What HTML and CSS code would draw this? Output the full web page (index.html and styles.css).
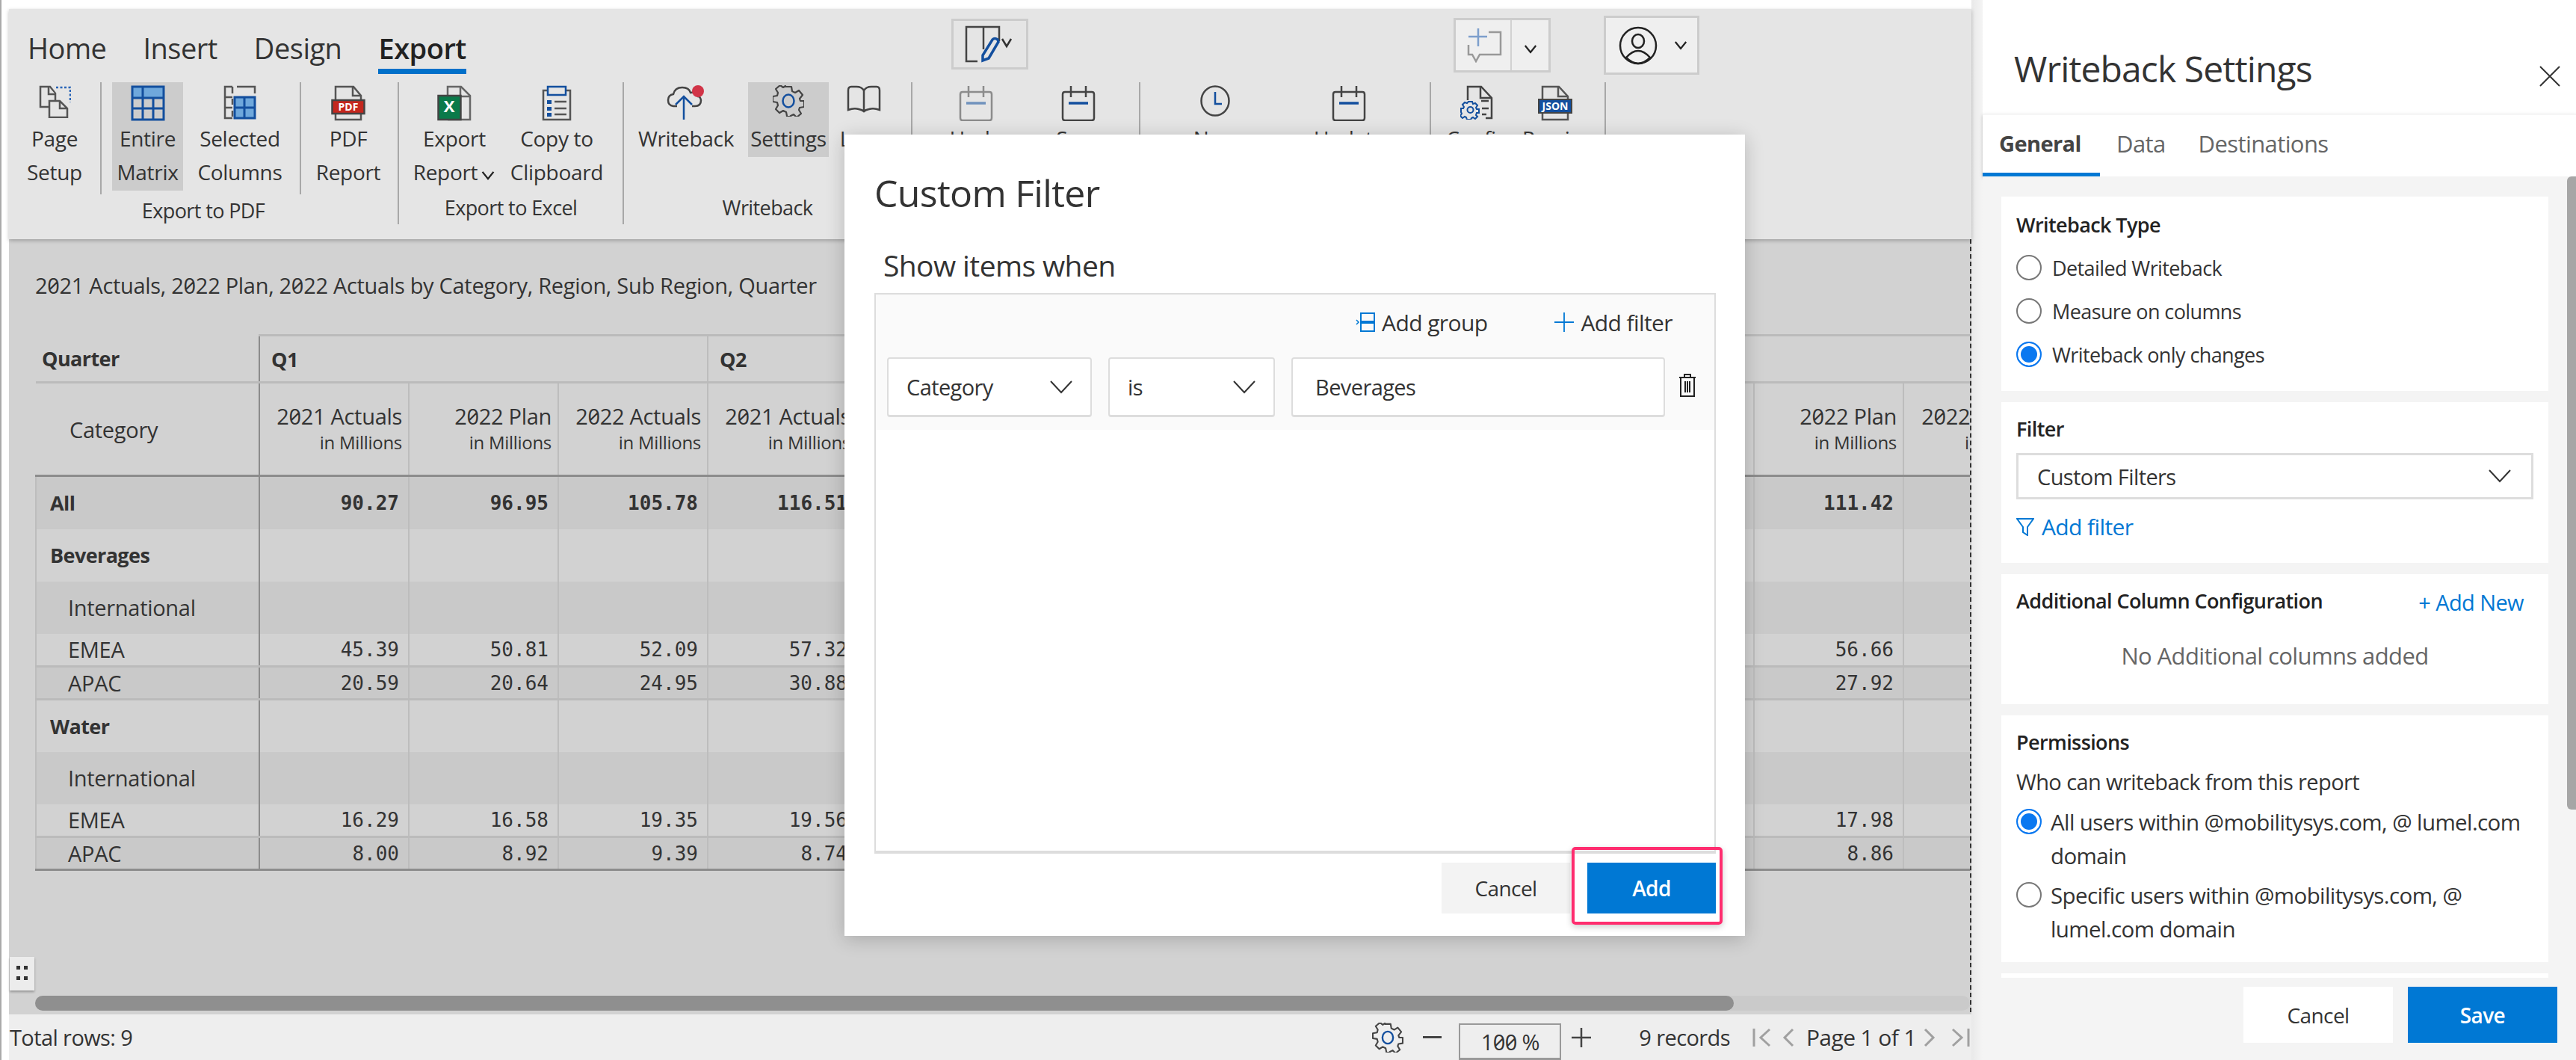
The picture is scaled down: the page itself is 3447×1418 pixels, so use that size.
FILE: index.html
```html
<!DOCTYPE html>
<html lang="en">

<head>
    <meta charset="UTF-8">
    <title>Writeback Settings</title>
    <link rel="stylesheet" href="styles.css">
</head>

<body>
    <svg class="sprite">
        <symbol id="calendar" viewBox="0 0 46 48">
            <path d="M13 1v15M33 1v15M2 12q0-3 3-3h36q3 0 3 3v32q0 3-3 3H5q-3 0-3-3z" fill="none" stroke="#444" stroke-width="2.5"/>
            <path d="M10 24h26" stroke="#134f9e" stroke-width="3.5"/>
        </symbol>
        <symbol id="gear" viewBox="0 0 42 42">
            <path d="M17 2h8l1 6 4 2 5-3 5 6-4 5 1 3h5v8l-6 1-1 3 3 5-6 5-4-4-4 2-1 1h-4v-1l-1-5-4-2-5 3-5-5 3-5-1-4-6-1v-7l6-1 1-4-3-5 6-5 4 3 3-2z" fill="none" stroke="#444" stroke-width="2.2" stroke-linejoin="round"/>
            <ellipse cx="21" cy="21" rx="7.5" ry="8.5" fill="none" stroke="#134f9e" stroke-width="2.5"/>
        </symbol>
        <symbol id="chev" viewBox="0 0 20 14">
            <path d="M2 2l8 10 8-10" fill="none" stroke="currentColor" stroke-width="2.5"/>
        </symbol>
    </svg>

    <div class="report">
        <div class="toolbar">
            <div class="topbar">
                <div class="tabs">
                    <span>Home</span>
                    <span>Insert</span>
                    <span>Design</span>
                    <span class="tab-on">Export</span>
                </div>
                <div class="tool-btn edit-btn">
                    <svg width="72" height="50" viewBox="0 0 72 50">
                        <path d="M18 48H3V2h44v19M26 2v30" fill="none" stroke="#444" stroke-width="2.5"/>
                        <path d="M25 40l13-21q3-3 7 0l1 3-13 22-8 3z" fill="none" stroke="#134f9e" stroke-width="3.5"/>
                        <path d="M51 18l6 10 6-10" fill="none" stroke="#333" stroke-width="2.5"/>
                    </svg>
                </div>
                <div class="tool-btn comment-btn">
                    <div class="comment-main">
                        <svg width="50" height="46" viewBox="0 0 50 46">
                            <path d="M30 5h16v30H18l-5 9-5-9H3V22" fill="none" stroke="#999" stroke-width="2.5"/>
                            <path d="M16 0v24M3 11h25" stroke="#7d9fcc" stroke-width="2.5"/>
                        </svg>
                    </div>
                    <div class="comment-arrow"><svg class="chev-sm" viewBox="0 0 20 14"><use href="#chev"/></svg></div>
                </div>
                <div class="tool-btn user-btn">
                    <svg width="52" height="52" viewBox="0 0 52 52">
                        <circle cx="26" cy="26" r="24" fill="none" stroke="#222" stroke-width="2.5"/>
                        <ellipse cx="26" cy="20" rx="8" ry="9" fill="none" stroke="#222" stroke-width="2.5"/>
                        <path d="M10 42q16-18 32 0q-16 16-32 0z" fill="none" stroke="#222" stroke-width="2.5"/>
                    </svg>
                    <svg class="chev-sm" viewBox="0 0 20 14"><use href="#chev"/></svg>
                </div>
            </div>

            <div class="ribbon">
                <div class="group group-pdf">
                    <div class="group-items">
                        <div class="item w-page">
                            <div class="icon">
                                <svg width="44" height="44" viewBox="0 0 44 44">
                                    <path d="M3 2h13l7 9v18H3z" fill="none" stroke="#555" stroke-width="2.5"/>
                                    <path d="M14 2v10h9M15 21h14l10 10v12H15z" fill="#e5e5e5" stroke="#555" stroke-width="2.5"/>
                                    <path d="M29 21v10h10" fill="none" stroke="#555" stroke-width="2.5"/>
                                    <path d="M24 3h19v20" fill="none" stroke="#2a66b8" stroke-width="2.5" stroke-dasharray="3 2.5"/>
                                </svg>
                            </div>
                            Page<br>Setup
                        </div>
                        <div class="sep"></div>
                        <div class="item item-on w-matrix">
                            <div class="icon">
                                <svg width="46" height="48" viewBox="0 0 46 48">
                                    <path d="M2 2h42v14H2z" fill="#6fa8dc"/>
                                    <path d="M2 2h42v44H2zM2 17h42M2 31h42M16 2v44M30 17v29" fill="none" stroke="#134f9e" stroke-width="3"/>
                                </svg>
                            </div>
                            Entire<br>Matrix
                        </div>
                        <div class="item w-selected">
                            <div class="icon">
                                <svg width="44" height="46" viewBox="0 0 44 46">
                                    <path d="M15 16h27v28H15z" fill="#6fa8dc"/>
                                    <path d="M12 2H2v42h10M18 2h24v9M2 16h10M2 30h10M12 2v9M12 18v8M12 34v8" fill="none" stroke="#555" stroke-width="2.5"/>
                                    <path d="M15 16h27v28H15zM15 30h27M28 16v28" fill="none" stroke="#134f9e" stroke-width="3"/>
                                </svg>
                            </div>
                            Selected<br>Columns
                        </div>
                        <div class="sep"></div>
                        <div class="item w-pdf">
                            <div class="icon">
                                <svg width="46" height="48" viewBox="0 0 46 48">
                                    <path d="M6 20V2h24l10 12v6M6 38v8h34v-8" fill="none" stroke="#555" stroke-width="2.5"/>
                                    <path d="M29 2v12h11" fill="none" stroke="#555" stroke-width="2.5"/>
                                    <rect x="1.5" y="20" width="43" height="18" fill="#c4271e" stroke="#444" stroke-width="2.5"/>
                                    <text x="23" y="34" class="svg-label" font-size="14">PDF</text>
                                </svg>
                            </div>
                            PDF<br>Report
                        </div>
                    </div>
                    <div class="group-label">Export to PDF</div>
                </div>

                <div class="group group-excel">
                    <div class="group-items">
                        <div class="item w-export">
                            <div class="icon">
                                <svg width="46" height="48" viewBox="0 0 46 48">
                                    <path d="M14 14V2h18l12 12v32H14" fill="#e5e5e5" stroke="#666" stroke-width="2.5"/>
                                    <path d="M31 2v13h13M30 14v32" fill="none" stroke="#666" stroke-width="2.5"/>
                                    <rect x="1.5" y="14" width="30" height="32" fill="#0a7a4a" stroke="#444" stroke-width="2.5"/>
                                    <text x="16" y="36" class="svg-label" font-size="22">X</text>
                                </svg>
                            </div>
                            Export<br>Report<svg class="chev-in" viewBox="0 0 20 14"><use href="#chev"/></svg>
                        </div>
                        <div class="item w-copy">
                            <div class="icon">
                                <svg width="40" height="48" viewBox="0 0 40 48">
                                    <path d="M8 7H2v39h36V7h-6" fill="none" stroke="#555" stroke-width="2.5"/>
                                    <rect x="8" y="2" width="24" height="11" fill="none" stroke="#134f9e" stroke-width="2.5"/>
                                    <path d="M7 20h6v5H7zM7 29h6v5H7zM7 37h6v5H7z" fill="#134f9e"/>
                                    <path d="M17 22h16M17 31h16M17 39h16" stroke="#555" stroke-width="2.5"/>
                                </svg>
                            </div>
                            Copy to<br>Clipboard
                        </div>
                    </div>
                    <div class="group-label">Export to Excel</div>
                </div>

                <div class="group group-wb">
                    <div class="group-items">
                        <div class="item w-wb">
                            <div class="icon">
                                <svg width="52" height="48" viewBox="0 0 52 48">
                                    <path d="M14 28H9q-7-1-7-8t7-8q2-9 12-9 9 0 11 7 8-1 10 5 3 0 4 5 0 8-8 8h-4" fill="none" stroke="#444" stroke-width="2.5"/>
                                    <path d="M23 46V15M12 26l11-11 11 11" fill="none" stroke="#134f9e" stroke-width="2.5"/>
                                    <circle cx="42" cy="8" r="8" fill="#d13447"/>
                                </svg>
                            </div>
                            Writeback
                        </div>
                        <div class="item item-on w-settings">
                            <div class="icon"><svg width="42" height="42"><use href="#gear"/></svg></div>
                            Settings
                        </div>
                        <div class="item w-learn">
                            <div class="icon">
                                <svg width="46" height="38" viewBox="0 0 46 38">
                                    <path d="M23 7q-3-5-10-5H6Q2 2 2 7l0 26q8-3 14-1 5 1 7 3 2-2 7-3 6-2 14 1V7q0-5-4-5h-7q-7 0-10 5zM23 7v28" fill="none" stroke="#444" stroke-width="2.5"/>
                                </svg>
                            </div>
                            Learn
                        </div>
                    </div>
                    <div class="group-label">Writeback</div>
                </div>

                <div class="group group-cal">
                    <div class="group-items">
                        <div class="item w-cal1">
                            <div class="icon"><svg class="faded" width="46" height="48"><use href="#calendar"/></svg></div>
                            Undo
                        </div>
                        <div class="item w-cal2">
                            <div class="icon"><svg width="46" height="48"><use href="#calendar"/></svg></div>
                            Save
                        </div>
                    </div>
                </div>

                <div class="group group-now">
                    <div class="group-items">
                        <div class="item w-now">
                            <div class="icon">
                                <svg width="40" height="42" viewBox="0 0 40 42">
                                    <ellipse cx="20" cy="21" rx="18.5" ry="19.5" fill="none" stroke="#444" stroke-width="2.5"/>
                                    <path d="M20 9v16h9" fill="none" stroke="#134f9e" stroke-width="2.5"/>
                                </svg>
                            </div>
                            Now
                        </div>
                        <div class="item w-cal3">
                            <div class="icon"><svg width="46" height="48"><use href="#calendar"/></svg></div>
                            Update
                        </div>
                    </div>
                </div>

                <div class="group group-config">
                    <div class="group-items">
                        <div class="item w-config">
                            <div class="icon">
                                <svg width="44" height="46" viewBox="0 0 44 46">
                                    <path d="M10 20V2h18l14 15v27h-8" fill="none" stroke="#444" stroke-width="2.5"/>
                                    <path d="M27 2v15h15M28 21h10M29 31h9M29 39h6" fill="none" stroke="#444" stroke-width="2.5"/>
                                    <path d="M11 22h5l1 3 3-1 3 3-2 3 1 2h3v5h-3l-1 3 2 2-3 3-3-2-2 1-1 2h-5l-1-3-2-1-3 2-3-3 2-3-1-2H1v-5h3l1-2-2-3 3-3 3 1z" fill="#e5e5e5" stroke="#134f9e" stroke-width="2"/>
                                    <circle cx="13.5" cy="33" r="4" fill="none" stroke="#134f9e" stroke-width="2"/>
                                </svg>
                            </div>
                            Config
                        </div>
                        <div class="item w-json">
                            <div class="icon">
                                <svg width="46" height="48" viewBox="0 0 46 48">
                                    <path d="M6 20V2h22l12 13v5M6 36v10h34V36" fill="none" stroke="#555" stroke-width="2.5"/>
                                    <path d="M27 2v13h13" fill="none" stroke="#555" stroke-width="2.5"/>
                                    <rect x="1" y="19" width="44" height="18" fill="#134f9e" stroke="#444" stroke-width="2"/>
                                    <text x="23" y="33" class="svg-label" font-size="14">JSON</text>
                                </svg>
                            </div>
                            Preview
                        </div>
                    </div>
                </div>
            </div>
        </div>

        <div class="canvas">
            <div class="report-title">2021 Actuals, 2022 Plan, 2022 Actuals by Category, Region, Sub Region, Quarter</div>
            <div class="table-clip">
                <table class="matrix">
                    <colgroup>
                        <col class="col-label"><col class="col-num"><col class="col-num"><col class="col-num"><col class="col-num"><col class="col-hidden"><col class="col-num"><col class="col-num">
                    </colgroup>
                    <thead>
                        <tr class="h-quarter">
                            <th class="first">Quarter</th>
                            <th colspan="3">Q1</th>
                            <th colspan="4">Q2</th>
                        </tr>
                        <tr class="h-measure">
                            <th class="first cat">Category</th>
                            <th>2021 Actuals<small>in Millions</small></th>
                            <th>2022 Plan<small>in Millions</small></th>
                            <th>2022 Actuals<small>in Millions</small></th>
                            <th>2021 Actuals<small>in Millions</small></th>
                            <th></th>
                            <th>2022 Plan<small>in Millions</small></th>
                            <th>2022 Actuals<small>in Millions</small></th>
                        </tr>
                    </thead>
                    <tbody>
                        <tr class="r-all"><td class="first">All</td><td>90.27</td><td>96.95</td><td>105.78</td><td>116.51</td><td></td><td>111.42</td><td></td></tr>
                        <tr class="r-cat"><td class="first">Beverages</td><td></td><td></td><td></td><td></td><td></td><td></td><td></td></tr>
                        <tr class="r-group"><td class="first">International</td><td></td><td></td><td></td><td></td><td></td><td></td><td></td></tr>
                        <tr class="r-leaf"><td class="first">EMEA</td><td>45.39</td><td>50.81</td><td>52.09</td><td>57.32</td><td></td><td>56.66</td><td></td></tr>
                        <tr class="r-leaf alt"><td class="first">APAC</td><td>20.59</td><td>20.64</td><td>24.95</td><td>30.88</td><td></td><td>27.92</td><td></td></tr>
                        <tr class="r-cat"><td class="first">Water</td><td></td><td></td><td></td><td></td><td></td><td></td><td></td></tr>
                        <tr class="r-group"><td class="first">International</td><td></td><td></td><td></td><td></td><td></td><td></td><td></td></tr>
                        <tr class="r-leaf"><td class="first">EMEA</td><td>16.29</td><td>16.58</td><td>19.35</td><td>19.56</td><td></td><td>17.98</td><td></td></tr>
                        <tr class="r-leaf alt last"><td class="first">APAC</td><td>8.00</td><td>8.92</td><td>9.39</td><td>8.74</td><td></td><td>8.86</td><td></td></tr>
                    </tbody>
                </table>
            </div>
            <div class="drag-handle"><span></span><span></span><span></span><span></span></div>
            <div class="hscroll"><div class="hscroll-thumb"></div></div>
        </div>

        <div class="statusbar">
            <span class="total">Total rows: 9</span>
            <div class="status-right">
                <svg class="st-gear" width="42" height="40"><use href="#gear"/></svg>
                <span class="st-minus"></span>
                <span class="zoom-box">100 %</span>
                <svg class="st-plus" width="26" height="26" viewBox="0 0 26 26"><path d="M13 0v26M0 13h26" stroke="#444" stroke-width="2.5"/></svg>
                <span class="records">9 records</span>
                <svg class="pager first-pg" width="26" height="26" viewBox="0 0 26 26"><path d="M2 1v24M23 2L11 13l12 11" fill="none" stroke="#a0a0a0" stroke-width="3"/></svg>
                <svg class="pager" width="16" height="26" viewBox="0 0 16 26"><path d="M14 2L3 13l11 11" fill="none" stroke="#a0a0a0" stroke-width="3"/></svg>
                <span class="page-no">Page 1 of 1</span>
                <svg class="pager" width="16" height="26" viewBox="0 0 16 26"><path d="M2 2l11 11L2 24" fill="none" stroke="#a0a0a0" stroke-width="3"/></svg>
                <svg class="pager last-pg" width="26" height="26" viewBox="0 0 26 26"><path d="M24 1v24M3 2l12 11L3 24" fill="none" stroke="#a0a0a0" stroke-width="3"/></svg>
            </div>
        </div>

        <div class="modal">
            <div class="modal-title">Custom Filter</div>
            <div class="modal-sub">Show items when</div>
            <div class="filter-box">
                <div class="filter-head">
                    <div class="filter-actions">
                        <span class="action">
                            <svg width="26" height="26" viewBox="0 0 26 26"><path d="M7 1h18v11H7zM7 14h18v11H7z" fill="none" stroke="#0078d4" stroke-width="2"/><path d="M1 10l3 3-3 3" fill="none" stroke="#0078d4" stroke-width="1.5"/></svg>
                            Add group
                        </span>
                        <span class="action">
                            <svg width="26" height="26" viewBox="0 0 26 26"><path d="M13 0v26M0 13h26" stroke="#0078d4" stroke-width="1.8"/></svg>
                            Add filter
                        </span>
                    </div>
                    <div class="filter-row">
                        <div class="field f-category">Category<svg class="chev-lg" viewBox="0 0 30 18"><path d="M1 1l14 15L29 1" fill="none" stroke="#333" stroke-width="2"/></svg></div>
                        <div class="field f-is">is<svg class="chev-lg" viewBox="0 0 30 18"><path d="M1 1l14 15L29 1" fill="none" stroke="#333" stroke-width="2"/></svg></div>
                        <div class="field f-value">Beverages</div>
                        <svg class="trash" width="24" height="32" viewBox="0 0 24 32">
                            <path d="M1 5h22M8 5V1h8v4M3 5v25h18V5M9 10v15M12 10v15M15 10v15" fill="none" stroke="#222" stroke-width="2"/>
                        </svg>
                    </div>
                </div>
            </div>
            <div class="modal-foot">
                <button type="button" class="btn-cancel">Cancel</button>
                <div class="highlight"><button type="button" class="btn-add">Add</button></div>
            </div>
        </div>
    </div>

    <div class="gutter"></div>

    <div class="panel">
        <div class="panel-head">
            <span class="panel-title">Writeback Settings</span>
            <svg class="close" width="28" height="28" viewBox="0 0 28 28"><path d="M1 1l26 26M27 1L1 27" stroke="#333" stroke-width="2"/></svg>
        </div>
        <div class="panel-tabs">
            <span class="ptab ptab-on">General</span>
            <span class="ptab">Data</span>
            <span class="ptab">Destinations</span>
        </div>
        <div class="panel-body">
            <div class="card card-type">
                <div class="card-head">Writeback Type</div>
                <label class="radio-row"><span class="radio"></span>Detailed Writeback</label>
                <label class="radio-row"><span class="radio"></span>Measure on columns</label>
                <label class="radio-row"><span class="radio radio-on"></span>Writeback only changes</label>
            </div>
            <div class="card card-filter">
                <div class="card-head">Filter</div>
                <div class="select">Custom Filters<svg class="chev-lg" viewBox="0 0 30 18"><path d="M1 1l14 15L29 1" fill="none" stroke="#333" stroke-width="2"/></svg></div>
                <div class="link">
                    <svg width="24" height="24" viewBox="0 0 24 24"><path d="M1 1h22l-8 11v11l-6-4v-7z" fill="none" stroke="#0078d4" stroke-width="2"/></svg>
                    Add filter
                </div>
            </div>
            <div class="card card-cols">
                <div class="card-row">
                    <div class="card-head">Additional Column Configuration</div>
                    <span class="add-new">+ Add New</span>
                </div>
                <div class="empty">No Additional columns added</div>
            </div>
            <div class="card card-perm">
                <div class="card-head">Permissions</div>
                <div class="perm-sub">Who can writeback from this report</div>
                <label class="radio-row radio-wrap"><span class="radio radio-on"></span><span>All users within @mobilitysys.com, @ lumel.com domain</span></label>
                <label class="radio-row radio-wrap"><span class="radio"></span><span>Specific users within @mobilitysys.com, @ lumel.com domain</span></label>
            </div>
            <div class="card card-more"></div>
            <div class="panel-scroll"></div>
        </div>
        <div class="panel-foot">
            <button type="button" class="foot-cancel">Cancel</button>
            <button type="button" class="foot-save">Save</button>
        </div>
    </div>
</body>

</html>
```

FILE: styles.css
```css
* {
    box-sizing: border-box;
}
body {
    margin: 0;
    height: 1418px;
    display: flex;
    overflow: hidden;
    background: #fff;
    border-left: 2px solid #aaa;
    font-family: "Open Sans", "Noto Sans", sans-serif;
    font-size: 28px;
    letter-spacing: -0.6px;
    color: #333;
}
button {
    font: inherit;
    letter-spacing: inherit;
    border: none;
}
.sprite {
    display: none;
}
.faded {
    opacity: 0.55;
}
.svg-label {
    fill: #fff;
    font-weight: 700;
    text-anchor: middle;
    letter-spacing: 0;
}
.chev-sm {
    width: 18px;
    height: 13px;
    color: #222;
}
.chev-lg {
    width: 30px;
    height: 18px;
}
.chev-in {
    width: 20px;
    height: 13px;
    margin-left: 4px;
    color: #222;
}

/* left report */
.report {
    position: relative;
    width: 2626px;
    margin: 12px 0 0 10px;
    display: flex;
    flex-direction: column;
}
.toolbar {
    height: 308px;
    background: #e5e5e5;
    box-shadow: 0 2px 5px rgba(0, 0, 0, 0.25);
    position: relative;
    z-index: 1;
}
.topbar {
    height: 98px;
    display: flex;
    align-items: flex-start;
}
.tabs {
    display: flex;
    width: 600px;
    gap: 49px;
    margin: 24px 0 0 25px;
    font-size: 38px;
    line-height: 56px;
    letter-spacing: -0.5px;
}
.tabs span {
    height: 63px;
}
.tab-on {
    font-weight: 600;
    color: #222;
    border-bottom: 7px solid #0070c9;
}
.tool-btn {
    display: flex;
    align-items: center;
    border: 3px solid #ccc;
}
.edit-btn {
    width: 103px;
    height: 68px;
    margin: 13px 0 0 636px;
    padding-left: 14px;
}
.comment-btn {
    width: 130px;
    height: 73px;
    margin: 12px 0 0 569px;
    background: #efefef;
}
.comment-main {
    width: 75px;
    height: 100%;
    padding: 11px 0 0 14px;
    border-right: 2px solid #d2d2d2;
}
.comment-arrow {
    flex: 1;
    text-align: center;
}
.user-btn {
    width: 128px;
    height: 79px;
    margin: 9px 0 0 71px;
    padding-left: 17px;
    gap: 22px;
    background: #efefef;
}

.ribbon {
    display: flex;
    height: 190px;
}
.group {
    border-right: 2px solid #a8a8a8;
    display: flex;
    flex-direction: column;
    align-items: stretch;
}
.group-pdf { width: 522px; }
.group-excel { width: 301px; }
.group-wb { width: 386px; }
.group-cal { width: 305px; }
.group-now { width: 389px; }
.group-config { width: 234px; }
.group-items {
    display: flex;
    align-items: flex-start;
    height: 150px;
}
.group-label {
    text-align: center;
    line-height: 44px;
    font-size: 27px;
}
.item {
    text-align: center;
    line-height: 45px;
    padding-bottom: 2px;
    white-space: nowrap;
    letter-spacing: -0.3px;
}
.item-on {
    background: #ccc;
}
.icon {
    height: 53px;
    padding-top: 4px;
    display: flex;
    justify-content: center;
    align-items: flex-start;
}
.sep {
    width: 2px;
    height: 150px;
    background: #a8a8a8;
}
.w-page { width: 122px; }
.w-matrix { width: 95px; margin-left: 14px; }
.w-selected { width: 152px; margin-right: 4px; }
.w-pdf { width: 126px; }
.w-export { width: 148px; }
.w-copy { width: 126px; }
.w-wb { width: 166px; }
.w-settings { width: 108px; }
.w-learn { width: 94px; letter-spacing: -2px; }
.w-cal1 { width: 170px; }
.w-cal2 { width: 104px; }
.w-now { width: 200px; }
.w-cal3 { width: 158px; }
.w-config { width: 122px; }
.w-json { width: 88px; }

/* matrix area */
.canvas {
    position: relative;
    flex: 1;
    display: flex;
    flex-direction: column;
    min-height: 0;
    background: #d2d2d2;
    padding: 42px 0 2px 35px;
    border-right: 2px dashed #333;
}
.report-title {
    line-height: 40px;
    font-size: 29px;
    letter-spacing: -0.3px;
    font-feature-settings: "zero";
}
.table-clip {
    margin-top: 45px;
    overflow: hidden;
}
.matrix {
    table-layout: fixed;
    width: 2699px;
    border-collapse: collapse;
    font-family: "DejaVu Sans Mono", monospace;
    font-size: 26px;
    letter-spacing: 0;
}
.col-label { width: 299px; }
.col-num { width: 200px; }
.col-hidden { width: 1200px; }
.matrix th,
.matrix td {
    padding: 0;
    border-left: 2px solid #bdbdbd;
}
.matrix .first {
    text-align: left;
    font-family: "Open Sans", "Noto Sans", sans-serif;
    font-size: 27px;
    letter-spacing: -0.6px;
    border-left: 2px solid #bdbdbd;
    border-right: 2px solid #8c8c8c;
}
.h-quarter th {
    height: 63px;
    text-align: left;
    padding-left: 15px;
    font-family: "Open Sans", "Noto Sans", sans-serif;
    font-weight: 700;
    font-size: 27px;
    letter-spacing: -0.6px;
    border-top: 3px solid #bbb;
    border-bottom: 3px solid #bbb;
}
.matrix .h-quarter .first,
.matrix .h-measure .first {
    border-left: none;
}
.matrix .h-quarter .first {
    padding-left: 8px;
    font-weight: 700;
    border-top: none;
}
.h-measure th {
    height: 125px;
    text-align: right;
    padding-right: 8px;
    font-family: "Open Sans", "Noto Sans", sans-serif;
    font-weight: 400;
    font-size: 29px;
    line-height: 35px;
    letter-spacing: -0.3px;
    font-feature-settings: "zero";
    border-bottom: 3px solid #8c8c8c;
    vertical-align: middle;
}
.h-measure small {
    display: block;
    font-size: 24px;
}
.matrix .h-measure .cat {
    padding-left: 45px;
    font-weight: 400;
    font-size: 29px;
    letter-spacing: -0.3px;
}
.matrix td {
    text-align: right;
    padding-right: 12px;
}
.matrix tbody .first {
    padding-left: 18px;
}
.r-all td,
.r-cat td,
.r-group td {
    height: 70px;
}
.r-all td {
    height: 71px;
    background: #c9c9c9;
    font-weight: 700;
}
.r-cat td {
    background: #d2d2d2;
}
.matrix .r-all .first,
.matrix .r-cat .first {
    font-weight: 700;
}
.r-group td {
    background: #c9c9c9;
}
.matrix .r-group .first,
.matrix .r-leaf .first {
    padding-left: 42px;
    font-size: 29px;
    letter-spacing: -0.3px;
}
.r-leaf td {
    height: 44px;
    background: #d2d2d2;
    border-bottom: 3px solid #bbb;
}
.r-leaf.alt td {
    background: #c9c9c9;
}
.r-leaf.last td {
    border-bottom: 3px solid #8c8c8c;
}
.drag-handle {
    position: absolute;
    left: 1px;
    bottom: 29px;
    width: 33px;
    height: 45px;
    padding: 12px 9px;
    background: #ececec;
    box-shadow: 0 2px 3px rgba(0, 0, 0, 0.3);
    display: grid;
    grid-template-columns: 6px 6px;
    gap: 6px 4px;
}
.drag-handle span {
    width: 5px;
    height: 5px;
    background: #333;
}
.hscroll {
    margin-top: auto;
    height: 20px;
    border-radius: 10px;
    background: #cacaca;
}
.hscroll-thumb {
    width: 2273px;
    height: 20px;
    border-radius: 10px;
    background: #8f8f8f;
}
.statusbar {
    height: 64px;
    display: flex;
    align-items: center;
    background: #eee;
    border-top: 3px solid #d2d2d2;
    font-size: 29px;
}
.total {
    margin-left: 1px;
}
.status-right {
    margin-left: auto;
    display: flex;
    align-items: center;
    height: 100%;
}
.st-gear {
    margin-right: 26px;
}
.st-minus {
    width: 25px;
    height: 3px;
    background: #444;
}
.zoom-box {
    width: 137px;
    height: 49px;
    margin: 11px 14px 0 23px;
    line-height: 46px;
    text-align: center;
    border: 2px solid #999;
    border-bottom-width: 3px;
    font-feature-settings: "zero";
}
.records {
    margin: 0 30px 0 64px;
}
.first-pg {
    margin-right: 14px;
}
.page-no {
    margin: 0 10px 0 16px;
    font-size: 30px;
}
.last-pg {
    margin: 0 2px 0 20px;
}

/* custom filter dialog */
.modal {
    position: absolute;
    z-index: 2;
    left: 1118px;
    top: 168px;
    width: 1205px;
    height: 1072px;
    padding: 0 39px 0 40px;
    background: #fff;
    box-shadow: 0 4px 24px rgba(0, 0, 0, 0.2);
    display: flex;
    flex-direction: column;
}
.modal-title {
    margin-top: 50px;
    font-size: 50px;
    line-height: 56px;
    letter-spacing: -0.7px;
}
.modal-sub {
    margin: 45px 0 0 12px;
    font-size: 39px;
    line-height: 48px;
    letter-spacing: -0.6px;
}
.filter-box {
    margin-top: 13px;
    height: 750px;
    border: 2px solid #ddd;
    border-bottom-width: 4px;
}
.filter-head {
    height: 181px;
    background: #fafafa;
    padding: 0 15px;
}
.filter-actions {
    display: flex;
    justify-content: flex-end;
    gap: 90px;
    height: 84px;
    padding: 24px 41px 0 0;
}
.action {
    display: flex;
    align-items: center;
    gap: 9px;
    height: 26px;
    font-size: 30px;
}
.filter-row {
    display: flex;
    align-items: center;
    gap: 22px;
    font-size: 29px;
}
.field {
    height: 80px;
    background: #fff;
    border: 2px solid #ddd;
    border-bottom-width: 3px;
    border-radius: 4px;
    padding: 0 24px;
    display: flex;
    align-items: center;
    justify-content: space-between;
}
.f-category { width: 274px; }
.f-is { width: 223px; }
.f-value { width: 500px; padding-left: 30px; }
.trash {
    margin-left: -4px;
    margin-top: -4px;
}
.modal-foot {
    display: flex;
    justify-content: flex-end;
    margin-top: 12px;
    height: 68px;
}
.btn-cancel {
    width: 172px;
    height: 68px;
    background: #f3f3f3;
    color: #333;
}
.highlight {
    position: relative;
    margin-left: 23px;
    width: 172px;
    height: 68px;
}
.highlight::after {
    content: "";
    box-sizing: border-box;
    position: absolute;
    left: -21px;
    top: -21px;
    width: 202px;
    height: 104px;
    border: 4px solid #ff2d6f;
    border-radius: 5px;
    box-shadow: 0 3px 8px rgba(0, 0, 0, 0.2);
}
.btn-add {
    width: 172px;
    height: 68px;
    background: #0078d4;
    color: #fff;
    font-weight: 600;
}

/* settings panel */
.gutter {
    width: 15px;
    background: linear-gradient(to right, #e9e9e9, #f4f4f4);
}
.panel {
    width: 794px;
    display: flex;
    flex-direction: column;
    height: 1418px;
    background: #fff;
}
.panel-head {
    height: 152px;
    padding: 62px 21px 0 42px;
    display: flex;
    justify-content: space-between;
    align-items: flex-start;
}
.panel-title {
    font-size: 48px;
    line-height: 60px;
    letter-spacing: -0.9px;
}
.close {
    margin-top: 26px;
}
.panel-tabs {
    height: 84px;
    display: flex;
    border-top: 2px solid #f6f6f6;
    box-shadow: 0 2px 4px rgba(0, 0, 0, 0.25);
    position: relative;
    font-size: 31px;
    color: #666;
}
.ptab {
    padding: 0 22px;
    line-height: 76px;
}
.ptab-on {
    width: 157px;
    color: #444;
    font-size: 29px;
    font-weight: 700;
    border-bottom: 5px solid #0078d4;
}
.panel-body {
    position: relative;
    flex: 1;
    min-height: 0;
    overflow: hidden;
    background: #f4f4f4;
    padding: 27px 37px 0 25px;
    display: flex;
    flex-direction: column;
    gap: 15px;
}
.panel-scroll {
    position: absolute;
    right: 0;
    top: 0;
    width: 12px;
    height: 847px;
    background: #a6a6a6;
    border-radius: 6px 0 0 6px;
}
.card {
    background: #fff;
    padding: 20px 20px 0;
    flex-shrink: 0;
}
.card-type { height: 260px; }
.card-filter { height: 215px; padding-top: 18px; }
.card-cols { height: 174px; padding-top: 18px; }
.card-perm { height: 330px; padding-top: 18px; }
.card-more { height: 60px; }
.card-head {
    line-height: 36px;
    font-size: 27px;
    font-weight: 600;
    color: #222;
}
.radio-row {
    display: flex;
    align-items: center;
    gap: 14px;
    height: 58px;
    font-size: 27px;
}
.card-type .card-head {
    margin-bottom: 10px;
}
.radio {
    width: 34px;
    height: 34px;
    flex-shrink: 0;
    border: 2.5px solid #777;
    border-radius: 50%;
    background: #fff;
}
.radio-on {
    border: 2.5px solid #0a78f0;
    background: #0a78f0;
    box-shadow: inset 0 0 0 4px #fff;
}
.select {
    margin-top: 14px;
    height: 62px;
    border: 3px solid #ddd;
    padding: 0 27px 0 25px;
    display: flex;
    align-items: center;
    justify-content: space-between;
    font-size: 29px;
}
.link {
    margin-top: 16px;
    display: flex;
    align-items: center;
    gap: 10px;
    color: #0078d4;
    font-size: 30px;
}
.card-row {
    display: flex;
    justify-content: space-between;
    padding-right: 13px;
}
.add-new {
    color: #0078d4;
    line-height: 40px;
    font-size: 29px;
}
.empty {
    text-align: center;
    margin-top: 31px;
    color: #666;
    line-height: 40px;
    font-size: 31px;
}
.perm-sub {
    margin-top: 17px;
    line-height: 36px;
    font-size: 29px;
}
.radio-wrap {
    align-items: flex-start;
    height: auto;
    line-height: 45px;
    margin-top: 13px;
    gap: 12px;
    font-size: 29.5px;
}
.radio-wrap + .radio-wrap {
    margin-top: 8px;
}
.radio-wrap .radio {
    margin-top: 5px;
}
.panel-foot {
    height: 110px;
    background: #f4f4f4;
    padding: 12px 25px 0 0;
    display: flex;
    justify-content: flex-end;
    gap: 20px;
}
.foot-cancel,
.foot-save {
    width: 200px;
    height: 75px;
}
.foot-cancel {
    background: #fff;
    color: #333;
}
.foot-save {
    background: #0078d4;
    color: #fff;
    font-weight: 600;
}
```
